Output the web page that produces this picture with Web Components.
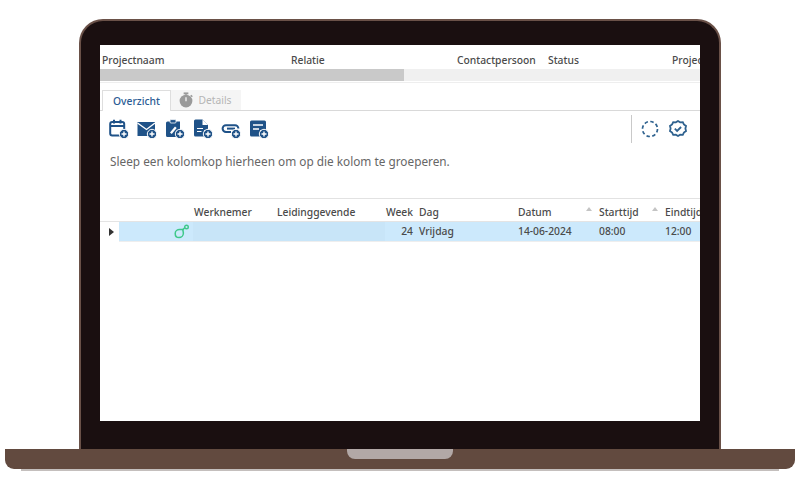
<!DOCTYPE html>
<html lang="nl"><head><meta charset="utf-8"><title>Overzicht</title>
<style>html,body{margin:0;background:#fff;overflow:hidden}body{width:802px;height:484px;font-family:"Noto Sans","Open Sans",sans-serif}</style>
</head><body>
<laptop-frame>
  <project-head></project-head>
  <tab-strip></tab-strip>
  <action-bar></action-bar>
  <group-hint>Sleep een kolomkop hierheen om op die kolom te groeperen.</group-hint>
  <data-grid></data-grid>
</laptop-frame>
<script>
function def(name, html){
  customElements.define(name, class extends HTMLElement{
    constructor(){super();this.attachShadow({mode:'open'}).innerHTML=html;}
  });
}
const C='#1f5288';
def('laptop-frame',`<style>
:host{display:flex;flex-direction:column;align-items:center;padding:19px 2px 0 0;width:802px;box-sizing:border-box}
.lid{box-sizing:border-box;width:642px;height:430px;background:#1a0f10;border:2px solid #6a5148;border-bottom:0;border-radius:24px 24px 0 0;padding:24px 19px 28px}
.screen{width:600px;height:376px;background:#fff;overflow:hidden;font-size:10.3px;color:#444;display:flex;flex-direction:column}
.base{box-sizing:border-box;width:790px;height:20px;background:#624a3f;border-radius:0 0 9px 9px;display:flex;justify-content:center}
.notch{width:106px;height:10px;background:#b2a8a6;border-radius:0 0 8px 8px}
.shadow{width:758px;height:2px;background:#c4bfbd}
</style>
<div class="lid"><div class="screen"><slot></slot></div></div>
<div class="base"><div class="notch"></div></div><div class="shadow"></div>`);
def('project-head',`<style>
:host{display:block;flex:none}
.cols{box-sizing:border-box;display:grid;grid-template-columns:189px 166px 91px 124px 1fr;height:24px;align-items:end;padding:0 0 1px 2px;font-size:10.3px;font-weight:500;color:#4a4a4a;white-space:nowrap;overflow:hidden;line-height:16px}
.track{height:12px;background:#f0f0f0}
.thumb{width:304px;height:12px;background:#c9c9c9}
.rule{height:1px;background:#eee;margin-top:1px}
</style>
<div class="cols"><span>Projectnaam</span><span>Relatie</span><span>Contactpersoon</span><span>Status</span><span>Project</span></div>
<div class="track"><div class="thumb"></div></div><div class="rule"></div>`);
def('tab-strip',`<style>
:host{display:flex;flex:none;margin-top:7px;padding-left:2px;border-bottom:1px solid #d9d9d9;height:20px}
.t{box-sizing:border-box;height:21px;display:flex;align-items:center;justify-content:center;gap:4px;font-size:10.3px}
.a{width:69px;background:#fff;border:1px solid #dedede;border-bottom:0;color:#2b5c94;font-weight:500}
.b{width:70px;height:20px;background:#f5f5f5;color:#b5b5b5;padding-right:2px}
svg{width:16px;height:16px}
</style>
<div class="t a">Overzicht</div>
<div class="t b"><svg viewBox="0 0 15 15" aria-hidden="true"><circle cx="7.500" cy="8.500" r="6" fill="#9a9a9a"/><rect x="5.300" y="0.400" width="4.400" height="1.800" fill="#9a9a9a"/><rect x="6.800" y="2" width="1.400" height="1.400" fill="#9a9a9a"/><path d="M12 3l1.400 1.400" stroke="#9a9a9a" stroke-width="1.400"/><path d="M7.500 5v3.600" stroke="#fff" stroke-width="1.100"/></svg>Details</div>`);
const plus=`<circle cx="15" cy="15" r="4.700" fill="${C}" stroke="#fff" stroke-width="1"/><path d="M15 12.500v5M12.500 15h5" stroke="#fff" stroke-width="1.400"/>`;
def('action-bar',`<style>
:host{display:flex;flex:none;align-items:center;height:35px;padding-left:9px;box-sizing:border-box}
.ic{display:flex;gap:8px}
svg{display:block;width:20px;height:20px}
.sp{flex:1}
.sep{width:1px;height:28px;background:#c9c9c9;margin-right:9px}
.r{width:18px;height:18px;margin-right:10px}
.r:last-child{margin-right:13px}
</style>
<div class="ic">
<svg viewBox="0 0 20 20" aria-hidden="true"><rect x="1.200" y="3" width="14" height="13.400" rx="2" fill="none" stroke="${C}" stroke-width="2"/><path d="M1 7h15M5 .8v3.600M11.500 .8v3.600" stroke="${C}" stroke-width="2"/>${plus}</svg>
<svg viewBox="0 0 20 20" aria-hidden="true"><path d="M.5 3h17.500v9H11v5H.5z" fill="${C}"/><path d="M.5 4l9 6.500L18 4" fill="none" stroke="#fff" stroke-width="1.400"/>${plus}</svg>
<svg viewBox="0 0 20 20" aria-hidden="true"><path d="M2.500 2.500h12.500v9H11v6.500H2.500a1.500 1.500 0 0 1-1.500-1.500V4a1.500 1.500 0 0 1 1.500-1.500z" fill="${C}"/><rect x="5" y=".6" width="6" height="3.400" rx="1" fill="${C}" stroke="#fff" stroke-width=".8"/><path d="M5 13.500l5-6 1.700 1.500-5 6z" fill="#fff"/>${plus}</svg>
<svg viewBox="0 0 20 20" aria-hidden="true"><path d="M2.500 .5H9.500l5.500 5.500V11H11v6.500H2.500A1.500 1.500 0 0 1 1 16v-14A1.500 1.500 0 0 1 2.500 .5z" fill="${C}"/><path d="M9.500 .5v5.500h5.500" fill="#fff"/><path d="M4 9.500h6M4 12.500h4.500" stroke="#fff" stroke-width="1.200"/>${plus}</svg>
<svg viewBox="0 0 20 20" aria-hidden="true"><path d="M10 13H5a3.400 3.400 0 0 1 0-6.800h9a3.400 3.400 0 0 1 3.400 3.400" fill="none" stroke="${C}" stroke-width="2"/><path d="M6 9.600h8" stroke="${C}" stroke-width="2"/>${plus}</svg>
<svg viewBox="0 0 20 20" aria-hidden="true"><path d="M2.500 1.500h13A1.500 1.500 0 0 1 17 3v8h-6v6.500H2.500A1.500 1.500 0 0 1 1 16V3a1.500 1.500 0 0 1 1.500-1.500z" fill="${C}"/><path d="M4 6h10M4 10h6" stroke="#fff" stroke-width="1.600"/>${plus}</svg>
</div>
<div class="sp"></div><div class="sep"></div>
<svg class="r" viewBox="0 0 18 18" aria-hidden="true"><circle cx="9" cy="9" r="7.500" fill="none" stroke="#2f628f" stroke-width="1.700" stroke-dasharray="3.500 2.400"/></svg>
<svg class="r" viewBox="0 0 18 18" aria-hidden="true"><path d="M9 1l2.200 1.300 2.600-.1 1.100 2.300 2.100 1.500-.6 2.500.6 2.500-2.100 1.500-1.100 2.300-2.600-.1L9 16l-2.200-1.300-2.600.1-1.100-2.300L1 11l.6-2.500L1 6l2.100-1.500 1.100-2.300 2.600.1z" fill="none" stroke="#2f628f" stroke-width="1.800"/><path d="M5.800 8.700l2.300 2.300 4-4" fill="none" stroke="#2f628f" stroke-width="1.800"/></svg>`);
def('group-hint',`<style>
:host{display:block;flex:none;height:52px;padding:7px 0 0 10px;box-sizing:border-box;font-size:11.8px;line-height:17px;color:#666;white-space:nowrap}
</style><slot></slot>`);
const cols='19px 74px 84px 108px 30px 4px 99px 81px 66px 1fr';
def('data-grid',`<style>
:host{display:block;flex:none;overflow:hidden}
.h,.r{display:grid;grid-template-columns:${cols};white-space:nowrap;align-items:center;font-size:10.3px}
.h{height:23px;padding-top:3px;border-top:1px solid #e2e2e2;margin-left:20px;grid-template-columns:73px 84px 108px 30px 4px 99px 81px 66px 1fr;color:#4a4a4a;font-weight:500;box-sizing:border-box}
.hb{height:1px;background:#e4e4e4}
.r{height:19px}
.r>*{height:19px;line-height:19px;background:#cce9fc;box-sizing:border-box}
.r>.ind{background:#fff;display:flex;align-items:center;padding-left:9px}
.r>.w{background:#c8e5f8}
.rt{text-align:right;padding-right:2px}
.s{position:relative}
.s::before{content:"";position:absolute;left:-13px;top:2px;border:3.500px solid transparent;border-top:0;border-bottom:4px solid #c4c4c4}
.rb{height:1px;background:#eee;margin-left:19px}
.ic{display:flex;justify-content:flex-end;align-items:center;padding-right:3px}
.g{color:#4a4a4a;font-weight:500}
</style>
<div class="h"><span></span><span style="padding-left:1px">Werknemer</span><span>Leidinggevende</span><span class="rt">Week</span><span></span><span>Dag</span><span>Datum</span><span class="s">Starttijd</span><span class="s">Eindtijd</span></div>
<div class="hb"></div>
<div class="r g"><span class="ind"><svg width="5" height="8" viewBox="0 0 5 8" aria-hidden="true"><path d="M0 0l5 4-5 4z" fill="#333"/></svg></span>
<span class="ic"><svg width="16" height="15" viewBox="0 0 16 15" aria-hidden="true"><path d="M1.200 9.500C1.200 7 3.500 5.500 5.500 5.500h3.300l.6 3.500c0 2.500-2 4.600-4.400 4.600S1.200 12 1.200 9.500z" fill="none" stroke="#3ec88a" stroke-width="1.500"/><path d="M8.500 6l2.500-2.500" stroke="#3ec88a" stroke-width="1.600"/><circle cx="12.500" cy="3" r="1.800" fill="none" stroke="#3ec88a" stroke-width="1.400"/></svg></span>
<span class="w"></span><span class="w"></span><span class="rt">24</span><span></span><span>Vrijdag</span><span>14-06-2024</span><span>08:00</span><span>12:00</span></div>
<div class="rb"></div>`);
</script>
</body></html>
